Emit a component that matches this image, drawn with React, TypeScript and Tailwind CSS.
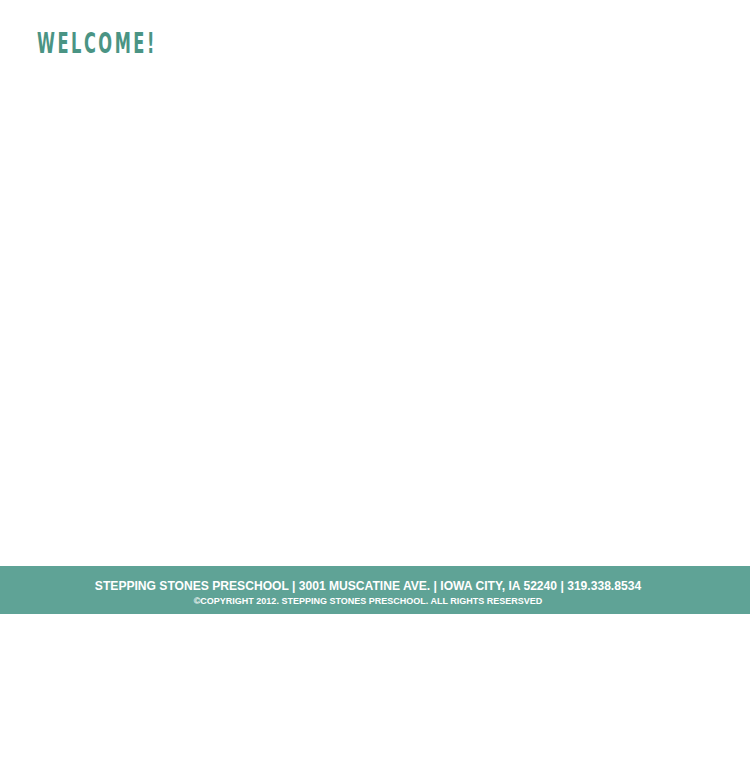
import React from "react";

const App = () => {
  return (
    <div className="min-h-screen bg-white flex flex-col" style={{ fontFamily: "'Liberation Sans', Arial, sans-serif" }}>
      <main className="h-[566px] px-[37px] pt-[29px]">
        <h1
          className="inline-block origin-left scale-x-[0.56] text-[29px] leading-none font-bold tracking-[4.5px] text-[#4a9484]"
          style={{ fontFamily: "'DejaVu Sans', sans-serif" }}
        >
          WELCOME!
        </h1>
      </main>
      <footer className="h-[48px] bg-[#5fa396] text-white flex flex-col items-center justify-center pt-[5px] pr-[14px] font-bold">
        <p className="text-[12.1px] leading-[16px]">
          STEPPING STONES PRESCHOOL | 3001 MUSCATINE AVE. | IOWA CITY, IA 52240 | 319.338.8534
        </p>
        <p className="text-[9px] leading-[12px] mt-[1px]">
          ©COPYRIGHT 2012. STEPPING STONES PRESCHOOL. ALL RIGHTS RESERSVED
        </p>
      </footer>
    </div>
  );
};

export default App;
